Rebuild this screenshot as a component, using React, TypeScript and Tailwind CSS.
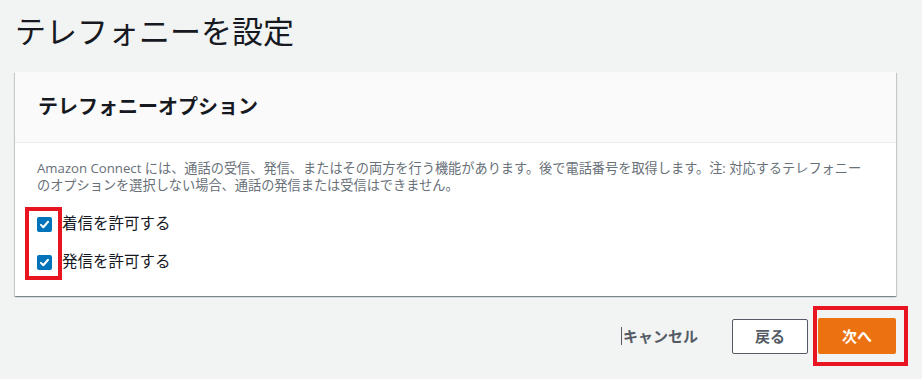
import React from 'react';

const FONT = '"Open Sans", "Noto Sans CJK JP", "Noto Sans", sans-serif';

function Check() {
  return (
    <span className="flex h-[15px] w-[15px] items-center justify-center rounded-[2px] bg-[#0073bb]">
      <svg viewBox="0 0 14 14" className="h-[11px] w-[11px]" fill="none" stroke="white" strokeWidth="2.6" strokeLinecap="round" strokeLinejoin="round">
        <polyline points="2.5,7.5 5.5,10.5 11.5,3.5" />
      </svg>
    </span>
  );
}

function Option({ label }: { label: string }) {
  return (
    <label className="flex h-[22px] items-center">
      <Check />
      <span className="ml-[10px] text-[15.5px] text-[#16191f]">{label}</span>
    </label>
  );
}

export default function App() {
  return (
    <div className="relative h-[379px] w-[922px] overflow-hidden bg-[#f2f3f3]" style={{ fontFamily: FONT }}>
      <h1 className="pl-[15px] pt-[11px] text-[31px] leading-[40px] text-[#16191f]">テレフォニーを設定</h1>

      <div className="ml-[15px] mt-[21px] w-[881px] bg-white shadow-[0_1px_1px_0_rgba(0,28,36,0.3),1px_1px_1px_0_rgba(0,28,36,0.15),-1px_1px_1px_0_rgba(0,28,36,0.15)]">
        <div className="flex h-[71px] items-center border-b border-[#eaeded] bg-[#fafafa] pl-[23px]">
          <h2 className="text-[20px] font-bold text-[#16191f]">テレフォニーオプション</h2>
        </div>
        <div className="px-[22px] pb-[23px] pt-[17px]">
          <p className="text-[13.2px] leading-[17px] text-[#687078]">
            Amazon Connect には、通話の受信、発信、またはその両方を行う機能があります。後で電話番号を取得します。注: 対応するテレフォニー
            <br />
            のオプションを選択しない場合、通話の発信または受信はできません。
          </p>
          <div className="mt-[19px] flex flex-col gap-[16px]">
            <Option label="着信を許可する" />
            <Option label="発信を許可する" />
          </div>
        </div>
      </div>

      <div className="mt-[22px] flex w-[896px] items-center justify-end">
        <button className="mr-[34px] flex items-center text-[15px] font-bold text-[#545b64]">
          <span className="mr-[1px] h-[18px] w-px bg-[#545b64]" />
          キャンセル
        </button>
        <button className="h-[35px] w-[76px] rounded-[2px] border border-[#545b64] bg-white text-[15px] font-bold text-[#545b64]">
          戻る
        </button>
        <button className="ml-[10px] h-[36px] w-[78px] rounded-[2px] bg-[#ec7211] text-[15px] font-bold text-white">
          次へ
        </button>
      </div>

      <div className="absolute left-[25px] top-[207px] h-[73px] w-[37px] border-[4px] border-[#e8141f]" />
      <div className="absolute left-[813px] top-[306px] h-[60px] w-[95px] border-[4px] border-[#e8141f]" />
    </div>
  );
}
